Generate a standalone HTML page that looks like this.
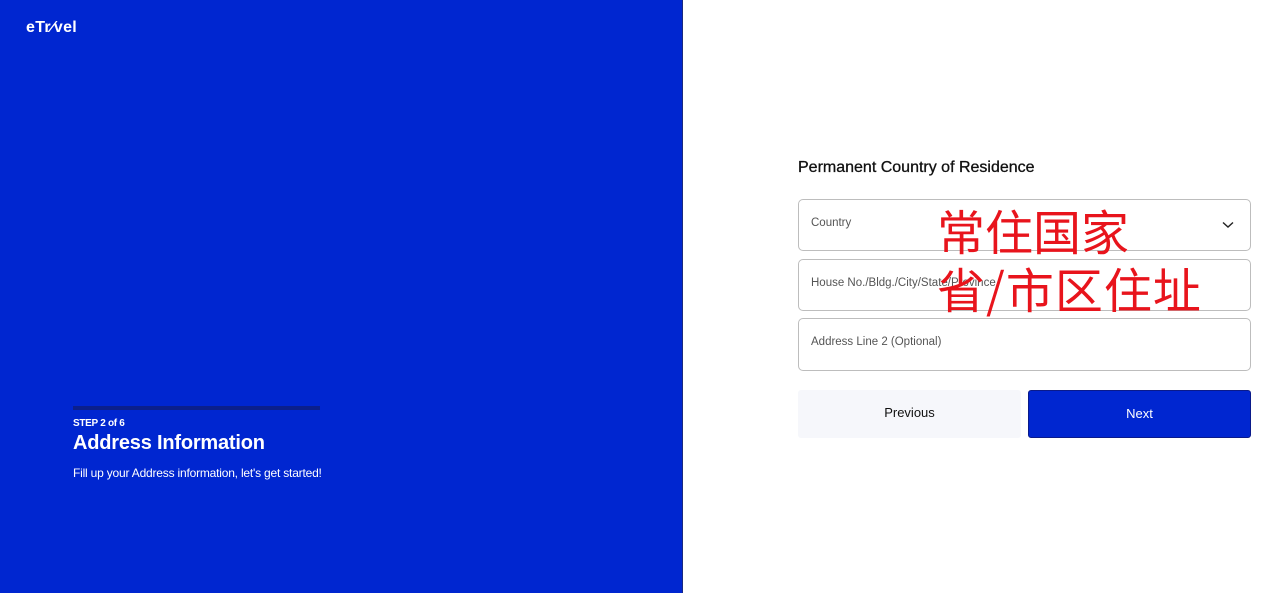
<!DOCTYPE html>
<html><head><style>
body{margin:0;width:1277px;height:593px;position:relative;overflow:hidden;background:#fff;font-family:"Liberation Sans",sans-serif}
.left{position:absolute;left:0;top:0;width:682px;height:593px;background:#0026d0;border-right:1px solid #1a2a80}
.logo{position:absolute;left:26px;top:19px;color:#fff;font-size:16px;font-weight:bold;letter-spacing:0.3px}
.bar{position:absolute;left:73px;top:406px;width:247px;height:4px;background:#0b1f8c}
.step{position:absolute;left:73px;top:418px;color:#fff;font-size:10px;font-weight:bold;letter-spacing:-0.3px}
.h{position:absolute;left:73px;top:432px;color:#fff;font-size:20px;font-weight:bold;letter-spacing:-0.2px}
.sub{position:absolute;left:73px;top:466px;color:#fff;font-size:12px;letter-spacing:-0.2px}
.title{position:absolute;left:798px;top:159px;font-size:16px;color:#111;letter-spacing:0px;-webkit-text-stroke:0.3px #111}
.in{position:absolute;left:798px;width:453px;height:52px;border:1px solid #bdbdbd;border-radius:5px;box-sizing:border-box}
.in span{position:absolute;left:12px;top:17px;font-size:11.5px;color:#555}
.btn{position:absolute;top:390px;height:48px;width:223px;font-size:13px;text-align:center;line-height:46px;border-radius:3px}
.red{position:absolute;color:#e8141c;font-family:"Noto Sans CJK SC",sans-serif;font-size:48px;line-height:1;font-weight:400}
</style></head><body>
<div class="left">
<div class="logo">eTr<span style="font-style:italic">⁄</span>vel</div>
<div class="bar"></div>
<div class="step">STEP 2 of 6</div>
<div class="h">Address Information</div>
<div class="sub">Fill up your Address information, let's get started!</div>
</div>
<div class="title">Permanent Country of Residence</div>
<div class="in" style="top:199px"><span>Country</span>
<svg style="position:absolute;right:16px;top:21px" width="12" height="8" viewBox="0 0 12 8"><path d="M1 1.5L6 6l5-4.5" fill="none" stroke="#222" stroke-width="1.4"/></svg></div>
<div class="in" style="top:259px"><span>House No./Bldg./City/State/Province</span></div>
<div class="in" style="top:318px;height:53px"><span>Address Line 2 (Optional)</span></div>
<div class="btn" style="left:798px;background:#f6f7fb;color:#111">Previous</div>
<div class="btn" style="left:1028px;background:#0026d0;color:#fff;border:1px solid #0a1a8a;box-sizing:border-box">Next</div>
<div class="red" style="left:937px;top:205px">常住国家</div>
<div class="red" style="left:937px;top:263px;letter-spacing:1px">省/市区住址</div>
</body></html>
